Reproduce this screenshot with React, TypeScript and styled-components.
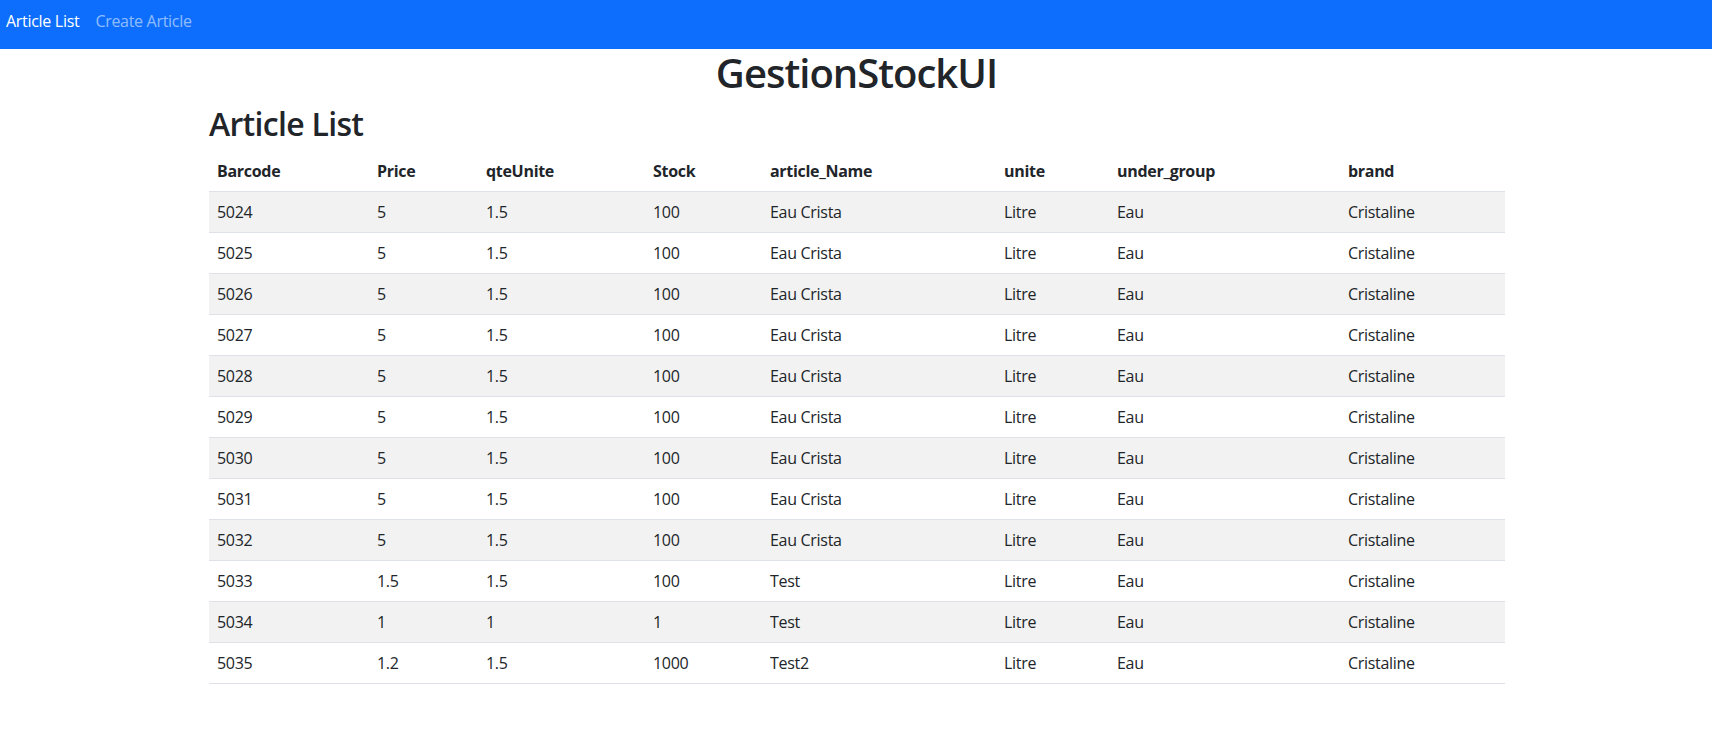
import React from "react";
import styled, { createGlobalStyle } from "styled-components";

const GlobalStyle = createGlobalStyle`
  *, *::before, *::after { box-sizing: border-box; }
  body {
    margin: 0;
    font-family: "Open Sans", "Noto Sans", sans-serif;
    font-size: 16px;
    line-height: 1.5;
    color: #212529;
    background: #fff;
  }
`;

const Navbar = styled.nav`
  height: 49px;
  background: #0d6efd;
  display: flex;
  align-items: flex-start;
  padding: 9px 0 0 6px;
  gap: 16px;
`;

const NavLink = styled.a<{ $active?: boolean }>`
  font-size: 16px;
  line-height: 24px;
  letter-spacing: -0.3px;
  text-decoration: none;
  cursor: pointer;
  color: ${(p) => (p.$active ? "#ffffff" : "rgba(255,255,255,0.55)")};
`;

const Container = styled.main`
  width: 1296px;
  margin: 0 auto;
  padding-left: 1px;
`;

const Title = styled.h1`
  margin: 0 0 8px;
  font-size: 40px;
  line-height: 48px;
  font-weight: 600;
  letter-spacing: -1px;
  text-align: center;
`;

const Subtitle = styled.h2`
  margin: 0 0 8px;
  font-size: 32px;
  line-height: 38.4px;
  font-weight: 600;
  letter-spacing: -0.7px;
`;

const Table = styled.table`
  width: 100%;
  border-collapse: collapse;
  table-layout: fixed;
`;

const HeadCell = styled.th`
  text-align: left;
  font-weight: 700;
  padding: 8px;
  line-height: 24px;
  letter-spacing: -0.3px;
  border-bottom: 1px solid #dee2e6;
`;

const Row = styled.tr<{ $striped: boolean }>`
  background: ${(p) => (p.$striped ? "#f2f2f2" : "transparent")};
`;

const Cell = styled.td`
  padding: 8px;
  line-height: 24px;
  letter-spacing: -0.3px;
  border-bottom: 1px solid #dee2e6;
  white-space: nowrap;
  overflow: hidden;
`;

const columns = [
  { key: "barcode", label: "Barcode", width: 160 },
  { key: "price", label: "Price", width: 109 },
  { key: "qte", label: "qteUnite", width: 167 },
  { key: "stock", label: "Stock", width: 117 },
  { key: "name", label: "article_Name", width: 234 },
  { key: "unite", label: "unite", width: 113 },
  { key: "group", label: "under_group", width: 231 },
  { key: "brand", label: "brand", width: 165 },
];

type Article = {
  barcode: string;
  price: string;
  qte: string;
  stock: string;
  name: string;
  unite: string;
  group: string;
  brand: string;
};

const base = { unite: "Litre", group: "Eau", brand: "Cristaline" };

const articles: Article[] = [
  ...["5024", "5025", "5026", "5027", "5028", "5029", "5030", "5031", "5032"].map((b) => ({
    barcode: b,
    price: "5",
    qte: "1.5",
    stock: "100",
    name: "Eau Crista",
    ...base,
  })),
  { barcode: "5033", price: "1.5", qte: "1.5", stock: "100", name: "Test", ...base },
  { barcode: "5034", price: "1", qte: "1", stock: "1", name: "Test", ...base },
  { barcode: "5035", price: "1.2", qte: "1.5", stock: "1000", name: "Test2", ...base },
];

export default function App() {
  return (
    <>
      <GlobalStyle />
      <Navbar>
        <NavLink $active>Article List</NavLink>
        <NavLink>Create Article</NavLink>
      </Navbar>
      <Container>
        <Title>GestionStockUI</Title>
        <Subtitle>Article List</Subtitle>
        <Table>
          <colgroup>
            {columns.map((c) => (
              <col key={c.key} style={{ width: c.width }} />
            ))}
          </colgroup>
          <thead>
            <tr>
              {columns.map((c) => (
                <HeadCell key={c.key}>{c.label}</HeadCell>
              ))}
            </tr>
          </thead>
          <tbody>
            {articles.map((a, i) => (
              <Row key={a.barcode} $striped={i % 2 === 0}>
                {columns.map((c) => (
                  <Cell key={c.key}>{a[c.key as keyof Article]}</Cell>
                ))}
              </Row>
            ))}
          </tbody>
        </Table>
      </Container>
    </>
  );
}
